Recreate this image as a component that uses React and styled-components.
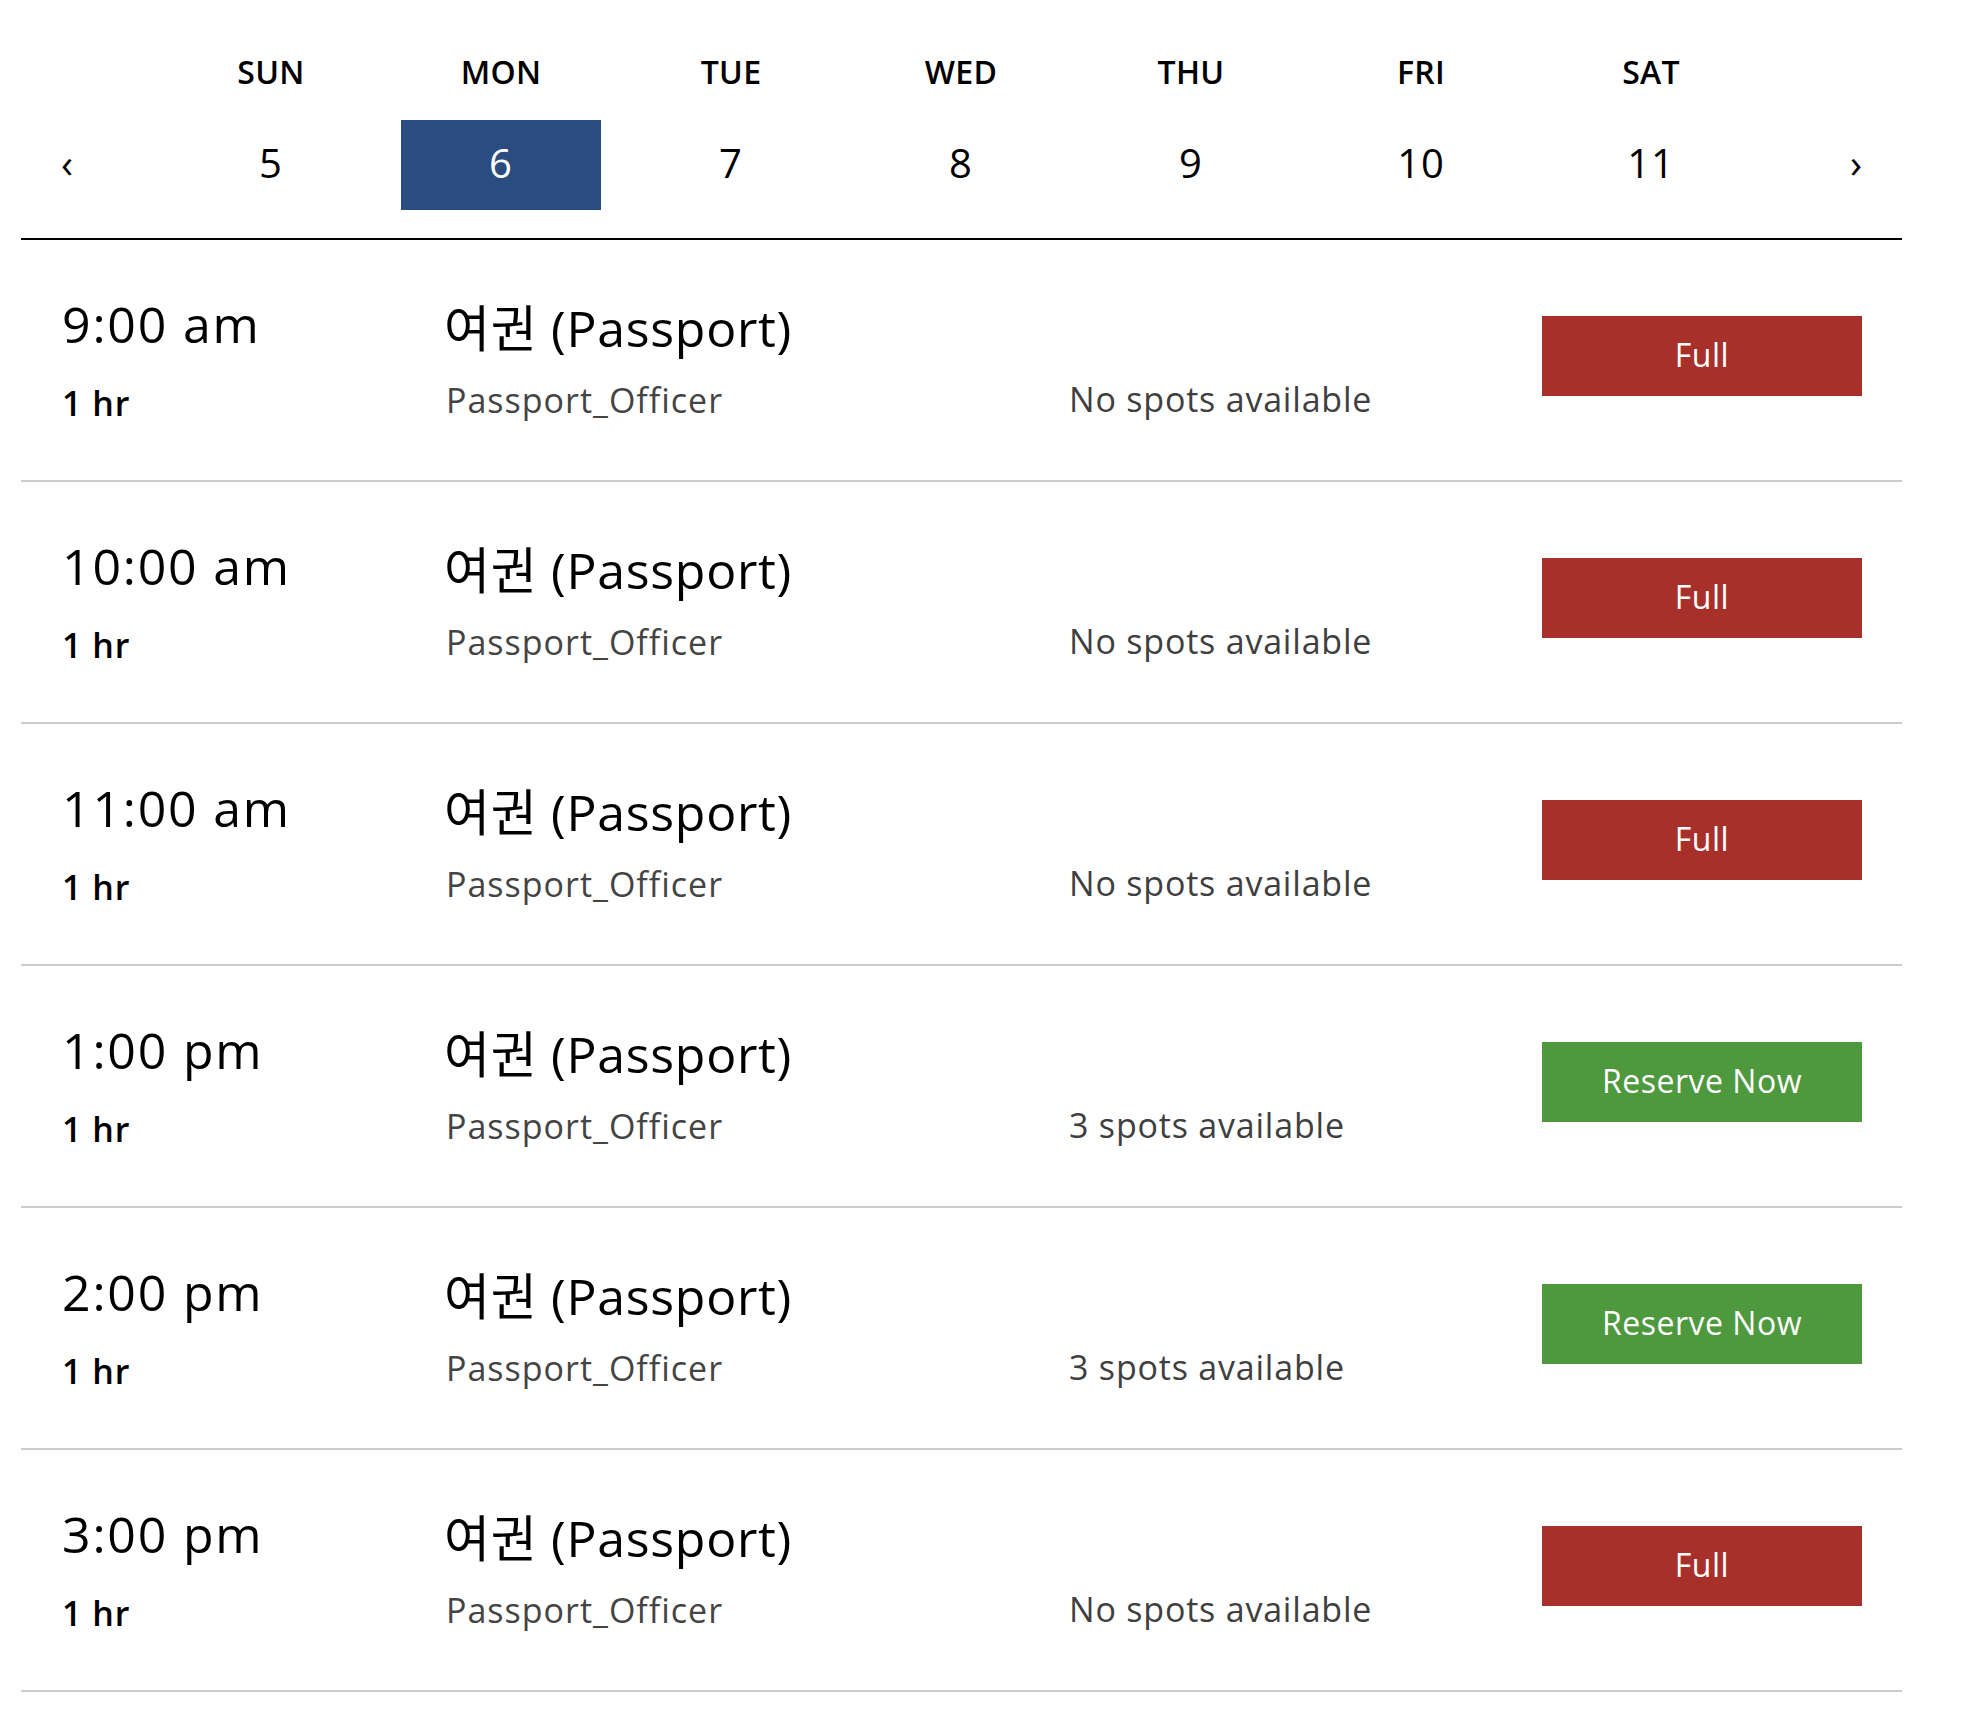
import React from "react";
import styled, { createGlobalStyle } from "styled-components";

const GlobalStyle = createGlobalStyle`
  body {
    margin: 0;
    background: #fff;
    font-family: "Open Sans", "Noto Sans CJK KR", sans-serif;
    color: #000;
  }
`;

const days = [
  { name: "SUN", date: 5 },
  { name: "MON", date: 6 },
  { name: "TUE", date: 7 },
  { name: "WED", date: 8 },
  { name: "THU", date: 9 },
  { name: "FRI", date: 10 },
  { name: "SAT", date: 11 },
];

const slots = [
  { time: "9:00 am", spots: 0 },
  { time: "10:00 am", spots: 0 },
  { time: "11:00 am", spots: 0 },
  { time: "1:00 pm", spots: 3 },
  { time: "2:00 pm", spots: 3 },
  { time: "3:00 pm", spots: 0 },
];

const Wrapper = styled.div`
  width: 1881px;
  padding-left: 21px;
`;

const WeekHeader = styled.div`
  display: grid;
  grid-template-columns: 135px repeat(7, 230px) 136px;
  grid-template-rows: 44px 90px;
  row-gap: 26px;
  padding: 50px 0 28px;
  border-bottom: 2px solid #000;
`;

const DayName = styled.div`
  grid-row: 1;
  text-align: center;
  font-size: 32px;
  font-weight: 600;
  line-height: 44px;
  letter-spacing: 0.3px;
`;

const DateCell = styled.div`
  grid-row: 2;
  margin: 0 15px;
  padding-bottom: 5px;
  display: flex;
  align-items: center;
  justify-content: center;
  font-size: 40px;
  letter-spacing: 1px;
  background: ${(p) => (p.$active ? "#2b4c7e" : "transparent")};
  color: ${(p) => (p.$active ? "#fff" : "#000")};
`;

const Arrow = styled.button`
  grid-row: 2;
  display: flex;
  align-items: center;
  justify-content: ${(p) => (p.$right ? "flex-end" : "flex-start")};
  padding: 0 40px 6px;
  border: none;
  background: none;
  font-family: inherit;
  font-size: 40px;
  color: #000;
  cursor: pointer;
`;

const SlotRow = styled.div`
  display: grid;
  grid-template-columns: 382px 625px 473px 320px;
  align-items: start;
  height: 240px;
  padding: 0 40px 0 41px;
  border-bottom: 2px solid #cccccc;
`;

const TimeCol = styled.div`
  padding-top: 54px;
  display: flex;
  flex-direction: column;
  gap: 29px;
`;

const Time = styled.div`
  font-size: 50px;
  line-height: 60px;
  letter-spacing: 1.8px;
`;

const Duration = styled.div`
  font-size: 34px;
  font-weight: 600;
  line-height: 41px;
  letter-spacing: 1px;
`;

const ServiceCol = styled.div`
  padding-top: 58px;
  display: flex;
  flex-direction: column;
  gap: 22px;
`;

const Service = styled.div`
  font-size: 50px;
  line-height: 60px;
  letter-spacing: 0.7px;
`;

const Staff = styled.div`
  padding-left: 2px;
  font-size: 34px;
  line-height: 41px;
  letter-spacing: 1px;
  color: #444;
`;

const Spots = styled.div`
  padding-top: 139px;
  font-size: 34px;
  font-weight: 500;
  line-height: 41px;
  letter-spacing: 0.8px;
  color: #3f3f3f;
`;

const SlotButton = styled.button`
  margin-top: 76px;
  width: 320px;
  height: 80px;
  padding: 0 0 4px;
  border: none;
  background: ${(p) => (p.$open ? "#4e983e" : "#a8302b")};
  color: #fff;
  font-family: inherit;
  font-size: 32px;
  font-weight: 500;
  letter-spacing: 0.5px;
  cursor: pointer;
`;

export default function App() {
  return (
    <Wrapper>
      <GlobalStyle />
      <WeekHeader>
        {days.map((d, i) => (
          <DayName key={d.name} style={{ gridColumn: i + 2 }}>
            {d.name}
          </DayName>
        ))}
        <Arrow style={{ gridColumn: 1 }}>‹</Arrow>
        {days.map((d, i) => (
          <DateCell key={d.date} $active={d.date === 6} style={{ gridColumn: i + 2 }}>
            {d.date}
          </DateCell>
        ))}
        <Arrow $right style={{ gridColumn: 9 }}>›</Arrow>
      </WeekHeader>

      {slots.map((s) => (
        <SlotRow key={s.time}>
          <TimeCol>
            <Time>{s.time}</Time>
            <Duration>1 hr</Duration>
          </TimeCol>
          <ServiceCol>
            <Service>여권 (Passport)</Service>
            <Staff>Passport_Officer</Staff>
          </ServiceCol>
          <Spots>{s.spots ? `${s.spots} spots available` : "No spots available"}</Spots>
          <SlotButton $open={s.spots > 0}>{s.spots ? "Reserve Now" : "Full"}</SlotButton>
        </SlotRow>
      ))}
    </Wrapper>
  );
}
